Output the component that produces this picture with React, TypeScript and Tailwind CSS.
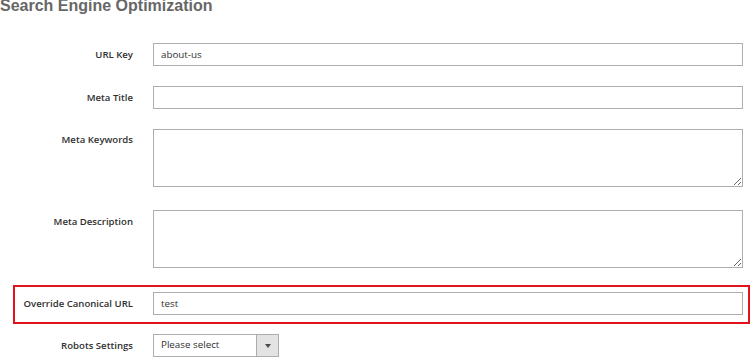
import React from 'react'

const labelCls =
  "w-[133px] shrink-0 text-right font-['Open_Sans',sans-serif] font-semibold text-[9.6px] leading-[14px] text-[#303030] whitespace-nowrap"
const fieldCls =
  "block h-[23px] w-full border border-[#adadad] bg-white px-[7px] font-['Open_Sans',sans-serif] text-[9.8px] text-[#303030] outline-none"
const areaCls =
  "block h-[58px] w-full border border-[#adadad] bg-white px-[7px] py-[4px] font-['Open_Sans',sans-serif] text-[9.8px] text-[#303030] outline-none resize"

function Row({
  label,
  top = false,
  labelPad = '',
  className = '',
  children,
}: {
  label: string
  top?: boolean
  labelPad?: string
  className?: string
  children: React.ReactNode
}) {
  return (
    <div className={`flex ${top ? 'items-start' : 'items-center'} ${className}`}>
      <label className={`${labelCls} ${labelPad}`}>{label}</label>
      <div className="ml-[20px] mr-[7px] flex-1">{children}</div>
    </div>
  )
}

export default function App() {
  return (
    <div className="h-[358px] w-[750px] overflow-hidden bg-white">
      <h2 className="mt-[-3px] font-['Liberation_Sans',Arial,sans-serif] text-[16px] font-bold leading-[18px] text-[#676767]">
        Search Engine Optimization
      </h2>

      <Row label="URL Key" className="mt-[28px]">
        <input className={fieldCls} defaultValue="about-us" />
      </Row>

      <Row label="Meta Title" className="mt-[20px]">
        <input className={fieldCls} defaultValue="" />
      </Row>

      <Row label="Meta Keywords" top labelPad="pt-[4px]" className="mt-[20px]">
        <textarea className={areaCls} defaultValue="" />
      </Row>

      <Row label="Meta Description" top labelPad="pt-[5px]" className="mt-[23px]">
        <textarea className={areaCls} defaultValue="" />
      </Row>

      {/* highlighted row */}
      <div className="ml-[13px] mt-[17px] flex items-center border-2 border-[#e3131b] pb-[7px] pt-[5px]">
        <label className="w-[118px] shrink-0 whitespace-nowrap text-right font-['Open_Sans',sans-serif] text-[9.6px] font-semibold leading-[14px] text-[#303030]">
          Override Canonical URL
        </label>
        <div className="ml-[20px] mr-[5px] flex-1">
          <input className={fieldCls} defaultValue="test" />
        </div>
      </div>

      <div className="mt-[10px] flex items-center">
        <label className={labelCls}>Robots Settings</label>
        <div className="ml-[20px] flex h-[23px] w-[126px] border border-[#adadad] bg-white">
          <span className="flex flex-1 items-center pl-[7px] font-['Open_Sans',sans-serif] text-[9.8px] text-[#303030]">
            Please select
          </span>
          <span className="flex w-[22px] items-center justify-center border-l border-[#adadad] bg-[#e3e3e3]">
            <svg width="6" height="4" viewBox="0 0 6 4">
              <path d="M0 0h6L3 4z" fill="#514943" />
            </svg>
          </span>
        </div>
      </div>
    </div>
  )
}
